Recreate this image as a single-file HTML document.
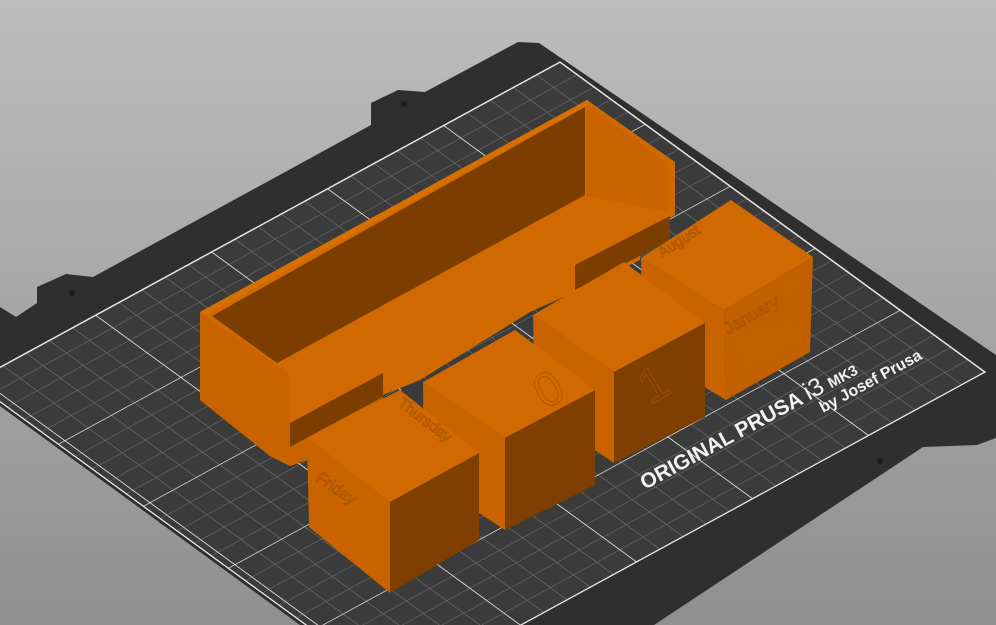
<!DOCTYPE html>
<html><head><meta charset="utf-8"><style>
html,body{margin:0;padding:0;width:996px;height:625px;overflow:hidden;background:#a5a5a5}
svg{display:block}
</style></head><body>
<svg width="996" height="625" viewBox="0 0 996 625" xmlns="http://www.w3.org/2000/svg">
<defs>
<linearGradient id="bg" x1="0" y1="0" x2="0" y2="1">
<stop offset="0" stop-color="#bdbdbd"/><stop offset="1" stop-color="#8f8f8f"/>
</linearGradient>
<pattern id="minor" patternUnits="userSpaceOnUse" width="10" height="10" patternTransform="matrix(1.7 1.24 -2.32 1.265 560 62)">
<path d="M0 0H10M0 0V10" stroke="#777" stroke-width="0.5" fill="none"/>
</pattern>
<pattern id="major" patternUnits="userSpaceOnUse" width="50" height="50" patternTransform="matrix(1.7 1.24 -2.32 1.265 560 62)">
<path d="M0 0H50M0 0V50" stroke="#e6e6e6" stroke-width="0.7" fill="none"/>
</pattern>
<clipPath id="gc"><polygon points="560,62 985,372 398,692 -27,382"/></clipPath>
</defs>
<rect width="996" height="625" fill="url(#bg)"/>
<polygon fill="#2f2f2f" points="518,42 539,43 996,355 996,438 977,445 923,447 654,625 300,625 0,406 0,307 16,317 37,303 37,287 66,274 93,277 371,125 371,103 398,90 425,92"/>
<circle cx="404" cy="104" r="3" fill="#1c1c1c"/><circle cx="72" cy="293" r="3" fill="#1c1c1c"/><circle cx="880" cy="461" r="3" fill="#1c1c1c"/>
<g clip-path="url(#gc)">
<polygon points="560,62 985,372 398,692 -27,382" fill="#3b3b3b"/>
<rect width="996" height="625" fill="url(#minor)"/>
<rect width="996" height="625" fill="url(#major)"/>
</g>
<polygon points="560,62 985,372 398,692 -27,382" fill="none" stroke="#e8e8e8" stroke-width="1.3"/>
<g fill="#f2f2f2" font-family="Liberation Sans, sans-serif">
<text transform="translate(645,490) rotate(-28.6)" font-size="21" font-weight="bold">ORIGINAL PRUSA <tspan font-size="25" font-weight="normal">i3</tspan> <tspan font-size="15">MK3</tspan></text>
<text transform="translate(823,413) rotate(-28.6)" font-size="16" font-weight="bold">by Josef Prusa</text>
</g>
<!-- tray -->
<polygon fill="#cf6900" points="200,312 587,100 675,162 675,215 640,235 640,260 575,292 530,312 420,380 383,395 383,420 307,460 290,466 270,456 200,400"/>
<polygon fill="#7c3d00" points="212,316 585,107 585,195 277,363"/>
<polygon fill="#c96400" points="587,104 668,163 668,212 587,196"/>
<polygon fill="#7c3d00" points="575,265 670,216 670,240 575,290"/>
<polygon fill="#7c3d00" points="290,423 383,373 383,397 290,447"/>
<polygon fill="#c86300" points="290,447 383,397 383,420 307,460 290,466"/>
<polygon fill="#3b3b3b" points="383,397 423,382 423,410 383,420"/>
<polygon fill="#c86300" points="200,312 290,375 290,466 270,456 200,400"/>
<polygon fill="#d87000" points="200,312 587,100 591,103 205,315"/>
<!-- cube D -->
<polygon fill="#c86300" points="641,258 724,310 726,400 643,350"/>
<polygon fill="#d06a00" points="641,258 731,200 813,257 724,310"/>
<polygon fill="#c26000" points="724,310 813,257 810,352 726,400"/>
<!-- cube C -->
<polygon fill="#c86300" points="533,315 614,372 614,463 535,410"/>
<polygon fill="#d06a00" points="533,315 624,262 705,323 614,372"/>
<polygon fill="#7e3f00" points="614,372 705,323 705,417 614,463"/>
<!-- cube B -->
<polygon fill="#c86300" points="423,382 505,438 505,530 424,477"/>
<polygon fill="#d06a00" points="423,382 515,330 595,390 505,438"/>
<polygon fill="#7e3f00" points="505,438 595,390 595,485 505,530"/>
<!-- cube A -->
<polygon fill="#c86300" points="307,438 390,502 390,593 309,527"/>
<polygon fill="#d06a00" points="307,438 400,390 479,453 390,502"/>
<polygon fill="#7e3f00" points="390,502 479,453 479,540 390,593"/>
<g font-family="Liberation Sans, sans-serif" fill="none" stroke="#a85200" stroke-width="0.7">
<text transform="translate(397,405) rotate(37)" font-size="15">Thursday</text>
<text transform="translate(662,258) rotate(-33)" font-size="15">August</text>
<text transform="translate(728,335) rotate(-30)" font-size="17">January</text>
<text transform="translate(545,410) rotate(-30)" font-size="48">0</text>
<text transform="translate(650,405) rotate(-30)" font-size="48">1</text>
<text transform="translate(315,480) rotate(35)" font-size="16">Friday</text>
</g>
</svg>
</body></html>
